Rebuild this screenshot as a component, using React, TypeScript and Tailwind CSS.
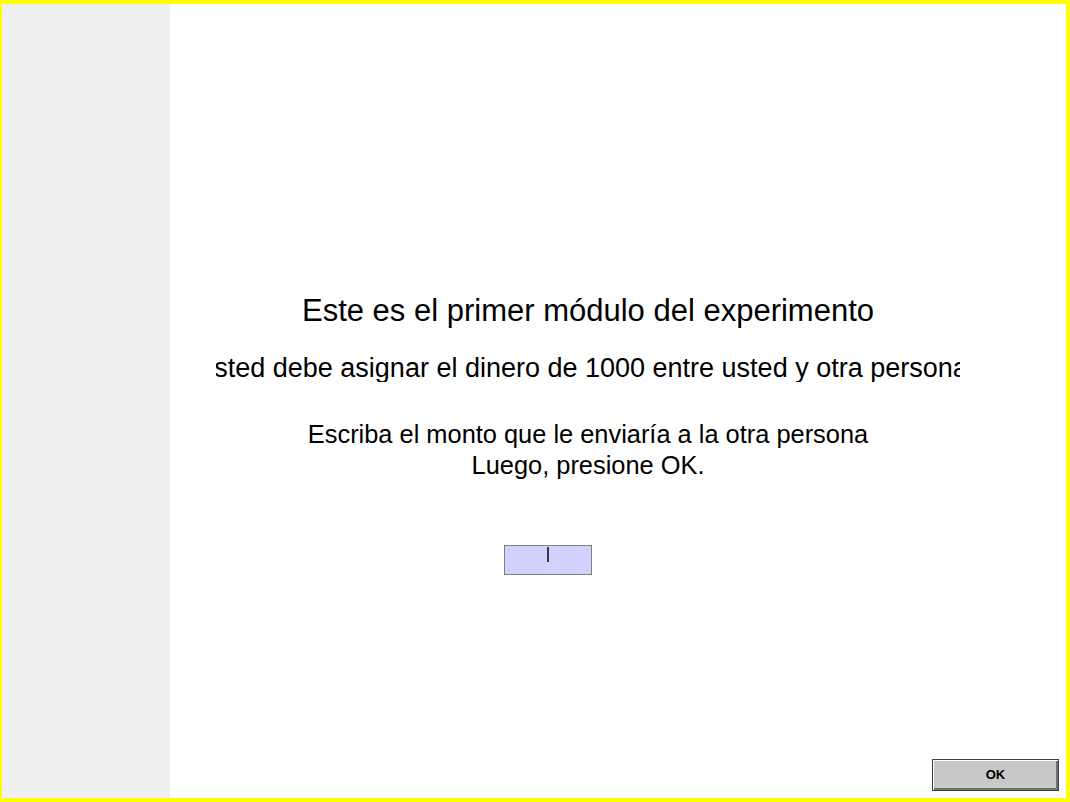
import React from "react";

export default function App() {
  return (
    <div
      className="w-[1070px] h-[802px] flex border-t-[4px] border-l-[2px] border-r-[4px] border-b-[4px] border-[#ffff00] bg-white overflow-hidden"
      style={{ fontFamily: '"Liberation Sans", Arial, sans-serif' }}
    >
      <div className="w-[168px] shrink-0 bg-[#efefef]" />
      <div className="flex-1 flex flex-col bg-white text-black">
        <div className="pt-[291px] pl-[46px] flex flex-col w-[790px]">
          <div className="w-[744px] h-[32px] flex justify-center">
            <span className="shrink-0 text-[31px] leading-[32px] whitespace-nowrap">
              Este es el primer módulo del experimento
            </span>
          </div>
          <div className="w-[744px] h-[28px] mt-[27px] flex justify-center overflow-hidden">
            <span className="shrink-0 -translate-x-[3px] text-[27px] leading-[28px] whitespace-nowrap">
              Usted debe asignar el dinero de 1000 entre usted y otra persona.
            </span>
          </div>
          <div className="w-[744px] mt-[37px] flex flex-col items-center text-[25.4px] leading-[31px] whitespace-nowrap">
            <span>Escriba el monto que le enviaría a la otra persona</span>
            <span>Luego, presione OK.</span>
          </div>
          <div className="mt-[64px] ml-[288px] w-[88px] h-[30px] bg-[#d2d2ff] border border-[#808080] flex justify-center items-start pt-[1px]">
            <span className="w-[2px] h-[15px] bg-[#3a3a3a]" />
          </div>
        </div>
        <div className="flex-1" />
        <div className="flex justify-end pr-[7px] pb-[7px]">
          <button className="w-[127px] h-[32px] bg-[#c8c8c8] border border-[#404040] shadow-[inset_1px_1px_0_#ffffff,inset_-2px_-2px_0_#707070] text-[13px] font-bold text-black flex items-center justify-center">
            OK
          </button>
        </div>
      </div>
    </div>
  );
}
